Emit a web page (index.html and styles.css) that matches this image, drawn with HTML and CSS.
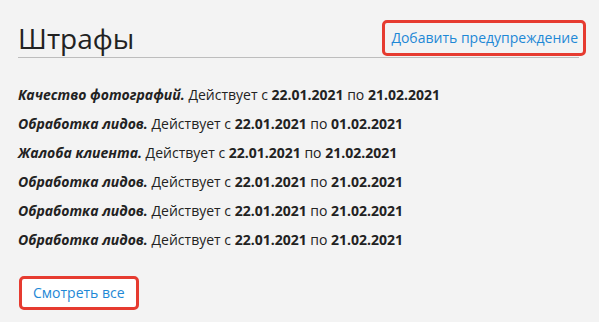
FILE: index.html
```html
<html>

<head>
  <title>Штрафы</title>
  <link rel="stylesheet" href="styles.css">
</head>

<body>
  <div class="page">
    <div class="header">
      <h1 class="title">Штрафы</h1>
      <a class="button add" href="#">Добавить предупреждение</a>
    </div>
    <ul class="fines">
      <li><b><i>Качество фотографий.</i></b> Действует с <b>22.01.2021</b> по <b>21.02.2021</b></li>
      <li><b><i>Обработка лидов.</i></b> Действует с <b>22.01.2021</b> по <b>01.02.2021</b></li>
      <li><b><i>Жалоба клиента.</i></b> Действует с <b>22.01.2021</b> по <b>21.02.2021</b></li>
      <li><b><i>Обработка лидов.</i></b> Действует с <b>22.01.2021</b> по <b>21.02.2021</b></li>
      <li><b><i>Обработка лидов.</i></b> Действует с <b>22.01.2021</b> по <b>21.02.2021</b></li>
      <li><b><i>Обработка лидов.</i></b> Действует с <b>22.01.2021</b> по <b>21.02.2021</b></li>
    </ul>
    <a class="button more" href="#">Смотреть все</a>
  </div>
</body>

</html>
```

FILE: styles.css
```css
body {
  margin: 0;
  background-color: #f3f3f3;
  font-family: "Open Sans", "Liberation Sans", sans-serif;
  color: #222;
}

.page {
  padding: 0 20px 0 18px;
}

.header {
  display: flex;
  justify-content: space-between;
  align-items: flex-end;
  height: 57px;
  border-bottom: 1px solid #bdbdbd;
}

.title {
  margin: 0 0 1px 0;
  font-size: 28px;
  font-weight: 400;
  line-height: 36px;
  color: #222;
}

.button {
  display: inline-block;
  border: 3px solid #e63b30;
  border-radius: 5px;
  color: #1e88d6;
  text-decoration: none;
  font-size: 14px;
  line-height: 20px;
}

.add {
  margin: 0 -7px 1px 0;
  padding: 5px 5px 5px 6px;
}

.fines {
  list-style: none;
  margin: 22px 0 22px 0;
  padding: 0;
  font-size: 14px;
  line-height: 29px;
}

.more {
  background-color: #fff;
  padding: 4px 11px 4px 11px;
  margin-left: 1px;
}
```
